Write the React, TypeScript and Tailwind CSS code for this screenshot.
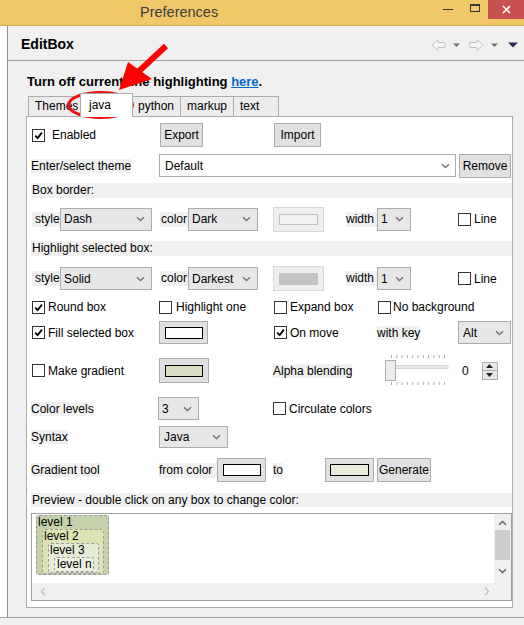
import React from "react";

function Chevron() {
  return (
    <svg width="9" height="6" viewBox="0 0 9 6" className="shrink-0">
      <path d="M1 1.2l3.5 3.3 3.5-3.3" fill="none" stroke="#707070" strokeWidth="1.3" />
    </svg>
  );
}

function Select({ value, className }: { value: string; className: string }) {
  return (
    <div
      className={`flex items-center justify-between border border-[#acacac] bg-[#e7e7e7] pl-[3px] pr-[6px] ${className}`}
    >
      <span>{value}</span>
      <Chevron />
    </div>
  );
}

function Check({ on }: { on?: boolean }) {
  return (
    <span className="flex h-[13px] w-[13px] shrink-0 items-center justify-center border border-[#333333] bg-white">
      {on && (
        <svg width="9" height="9" viewBox="0 0 9 9">
          <path d="M1.2 4.6l2.4 2.5L7.9 1.6" fill="none" stroke="#000" strokeWidth="1.8" />
        </svg>
      )}
    </span>
  );
}

function Label({ children, className = "" }: { children: React.ReactNode; className?: string }) {
  return <span className={`bg-[#f0f0f0] leading-[15px] ${className}`}>{children}</span>;
}

function Button({ children, className }: { children: React.ReactNode; className: string }) {
  return (
    <div className={`flex items-center justify-center border border-[#adadad] bg-[#e1e1e1] ${className}`}>
      {children}
    </div>
  );
}

function ColorButton({
  className,
  inner,
  disabled,
}: {
  className: string;
  inner: string;
  disabled?: boolean;
}) {
  return (
    <div
      className={`flex items-center justify-center border ${
        disabled ? "border-[#d9d9d9] bg-[#efefef]" : "border-[#adadad] bg-[#e1e1e1]"
      } ${className}`}
    >
      <div className={inner} />
    </div>
  );
}

function Slider() {
  const ticks = Array.from({ length: 11 }, (_, i) => 6 + i * 5.3);
  return (
    <svg width="66" height="32" viewBox="0 0 66 32" className="shrink-0">
      {ticks.map((x) => (
        <g key={x}>
          <line x1={x + 0.5} y1="0" x2={x + 0.5} y2="3" stroke="#b0b0b0" />
          <line x1={x + 0.5} y1="27" x2={x + 0.5} y2="30" stroke="#b0b0b0" />
        </g>
      ))}
      <rect x="10" y="10.5" width="53" height="3" fill="#e7e7e7" stroke="#d6d6d6" />
      <rect x="0.5" y="5.5" width="10" height="20" fill="#ececec" stroke="#adadad" />
    </svg>
  );
}

function Spinner() {
  return (
    <div className="flex h-[18px] w-[16px] flex-col border border-[#acacac] bg-[#e7e7e7]">
      <div className="flex flex-1 items-center justify-center border-b border-[#acacac]">
        <svg width="7" height="4" viewBox="0 0 7 4">
          <path d="M0 4L3.5 0 7 4z" fill="#222" />
        </svg>
      </div>
      <div className="flex flex-1 items-center justify-center">
        <svg width="7" height="4" viewBox="0 0 7 4">
          <path d="M0 0h7L3.5 4z" fill="#222" />
        </svg>
      </div>
    </div>
  );
}

function TitleBar() {
  return (
    <div className="flex h-[26px] items-center border-b border-[#d2a952] bg-[#f0c868]">
      <span className="ml-[140px] -mt-[2px] text-[14.5px] leading-[18px] text-[#3c3c3c]">Preferences</span>
      <div className="ml-auto flex h-full items-start">
        <div className="mt-[9px] mr-[17px] h-[1px] w-[10px] bg-[#333]" />
        <div className="mt-[4px] mr-[8px] h-[8px] w-[10px] border border-t-2 border-[#333]" />
        <div className="flex h-[19px] w-[36px] items-center justify-center bg-[#c75050]">
          <svg width="9" height="9" viewBox="0 0 9 9">
            <path d="M1 1l7 7M8 1L1 8" stroke="#fff" strokeWidth="1.6" />
          </svg>
        </div>
      </div>
    </div>
  );
}

function NavIcons() {
  return (
    <svg width="90" height="14" viewBox="0 0 90 14">
      <path d="M1 7l6-5.5v3h7v5H7v3z" fill="#f6f6f6" stroke="#c4c4c4" strokeLinejoin="round" />
      <path d="M22 5.5h7l-3.5 3.5z" fill="#707070" />
      <path d="M52 7l-6-5.5v3h-7v5h7v3z" fill="#f6f6f6" stroke="#c4c4c4" strokeLinejoin="round" />
      <path d="M60 5.5h7l-3.5 3.5z" fill="#707070" />
      <path d="M77 4.5h10l-5 5z" fill="#2c2c50" />
    </svg>
  );
}

function Annotation() {
  return (
    <svg
      className="pointer-events-none absolute left-0 top-0"
      width="524"
      height="625"
      viewBox="0 0 524 625"
    >
      <line x1="166" y1="46" x2="137" y2="73" stroke="#ff0000" strokeWidth="6" />
      <path d="M128 62L152 79 119 90z" fill="#ff0000" />
      <ellipse cx="100.5" cy="105" rx="32" ry="12.5" fill="none" stroke="#ee1111" strokeWidth="3" />
    </svg>
  );
}

function Tabs() {
  const base = "flex items-center border border-b-0 border-[#acacac] leading-[15px]";
  return (
    <div className="mt-[3px] ml-[2px] flex h-[23px] items-end">
      <div className={`${base} h-[20px] w-[53px] bg-[#ececec] pl-[6px]`}>Themes</div>
      <div className={`${base} relative z-10 -mb-px -ml-px h-[24px] w-[53px] bg-white pl-[8px]`}>
        java
      </div>
      <div className={`${base} -ml-px h-[20px] w-[49px] bg-[#ececec] pl-[5px]`}>python</div>
      <div className={`${base} -ml-px h-[20px] w-[54px] bg-[#ececec] pl-[6px]`}>markup</div>
      <div className={`${base} -ml-px h-[20px] w-[46px] bg-[#ececec] pl-[6px]`}>text</div>
    </div>
  );
}

function Preview() {
  const box = "flex flex-1 flex-col rounded-[3px] border border-dashed border-[#9c9c9c]";
  return (
    <div className="mt-[6px] flex h-[88px] flex-col border border-[#a0a0a0]">
      <div className="flex h-[69px]">
        <div className="flex flex-1 bg-white pt-[1px] pl-[4px]">
          <div className="flex h-[60px] w-[73px] flex-col overflow-hidden">
            <div className={`${box} bg-[#c5d1aa] pr-[4px] pl-[5px]`}>
              <span className="-ml-[4px] leading-[13px]">level 1</span>
              <div className={`${box} bg-[#dce4b6] pr-[4px] pl-[5px]`}>
                <span className="-ml-[4px] leading-[13px]">level 2</span>
                <div className={`${box} bg-[#e6ebd4] pr-[4px] pl-[5px]`}>
                  <span className="-ml-[4px] leading-[13px]">level 3</span>
                  <div className={`${box} bg-[#eef1e2] pl-[2px]`}>
                    <span className="leading-[13px]">level n</span>
                  </div>
                </div>
              </div>
            </div>
          </div>
        </div>
        <div className="flex w-[17px] flex-col items-center bg-[#f0f0f0]">
          <svg width="9" height="6" viewBox="0 0 9 6" className="mt-[6px]">
            <path d="M1 4.8l3.5-3.3 3.5 3.3" fill="none" stroke="#606060" strokeWidth="1.3" />
          </svg>
          <div className="mt-[4px] h-[30px] w-[15px] bg-[#cdcdcd]" />
          <svg width="9" height="6" viewBox="0 0 9 6" className="mt-[8px]">
            <path d="M1 1.2l3.5 3.3 3.5-3.3" fill="none" stroke="#606060" strokeWidth="1.3" />
          </svg>
        </div>
      </div>
      <div className="flex flex-1 items-center justify-between bg-[#f0f0f0] pr-[21px] pl-[8px]">
        <svg width="6" height="9" viewBox="0 0 6 9">
          <path d="M4.8 1L1.5 4.5 4.8 8" fill="none" stroke="#c0c0c0" strokeWidth="1.3" />
        </svg>
        <svg width="6" height="9" viewBox="0 0 6 9">
          <path d="M1.2 1l3.3 3.5L1.2 8" fill="none" stroke="#c0c0c0" strokeWidth="1.3" />
        </svg>
      </div>
    </div>
  );
}

function Panel() {
  return (
    <div className="flex w-[487px] flex-col border border-[#acacac] bg-white pl-[4px] pb-[6px]">
      {/* enabled / export / import */}
      <div className="mt-[6px] flex h-[24px] items-center">
        <div className="flex w-[129px] items-center pl-[1px]">
          <Check on />
          <span className="ml-[7px]">Enabled</span>
        </div>
        <Button className="h-[24px] w-[43px]">Export</Button>
        <Button className="ml-[71px] h-[24px] w-[47px]">Import</Button>
      </div>

      {/* theme */}
      <div className="mt-[7px] flex h-[23px] items-center">
        <div className="w-[128px]">
          <Label>Enter/select theme</Label>
        </div>
        <div className="flex h-[23px] w-[297px] items-center justify-between border border-[#abadb3] bg-white pr-[5px] pl-[5px]">
          <span>Default</span>
          <Chevron />
        </div>
        <Button className="ml-[3px] h-[24px] w-[52px]">Remove</Button>
      </div>

      <div className="mt-[6px] h-[15px] bg-[#f0f0f0] pl-[1px] leading-[15px]">Box border:</div>

      <div className="mt-[8px] flex h-[26px] items-center">
        <Label className="ml-[1px] w-[28px] pl-[3px]">style</Label>
        <Select value="Dash" className="h-[23px] w-[92px]" />
        <Label className="ml-[8px] w-[28px] pl-[1px]">color</Label>
        <Select value="Dark" className="h-[23px] w-[70px]" />
        <ColorButton
          disabled
          className="ml-[15px] h-[25px] w-[51px]"
          inner="h-[11px] w-[39px] border border-[#c0c0c0] bg-[#f2f2f2]"
        />
        <Label className="ml-[22px] w-[31px]">width</Label>
        <Select value="1" className="h-[23px] w-[34px]" />
        <span className="ml-[47px]">
          <Check />
        </span>
        <span className="ml-[3px]">Line</span>
      </div>

      <div className="mt-[9px] h-[15px] bg-[#f0f0f0] pl-[1px] leading-[15px]">Highlight selected box:</div>

      <div className="mt-[9px] flex h-[27px] items-center">
        <Label className="ml-[1px] w-[28px] pl-[3px]">style</Label>
        <Select value="Solid" className="h-[23px] w-[92px]" />
        <Label className="ml-[8px] w-[28px] pl-[1px]">color</Label>
        <Select value="Darkest" className="h-[23px] w-[70px]" />
        <ColorButton
          disabled
          className="ml-[15px] h-[25px] w-[51px]"
          inner="h-[12px] w-[39px] bg-[#c3c3c3]"
        />
        <Label className="ml-[22px] w-[31px]">width</Label>
        <Select value="1" className="h-[23px] w-[34px]" />
        <span className="ml-[47px]">
          <Check />
        </span>
        <span className="ml-[3px]">Line</span>
      </div>

      {/* check row */}
      <div className="mt-[8px] flex h-[15px] items-center leading-[15px]">
        <div className="flex w-[128px] items-center pl-[1px]">
          <Check on />
          <span className="ml-[3px]">Round box</span>
        </div>
        <div className="flex w-[115px] items-center">
          <Check />
          <span className="ml-[4px]">Highlight one</span>
        </div>
        <div className="flex w-[104px] items-center">
          <Check />
          <span className="ml-[3px]">Expand box</span>
        </div>
        <div className="flex items-center">
          <Check />
          <span className="ml-[2px]">No background</span>
        </div>
      </div>

      <div className="mt-[6px] flex h-[23px] items-center">
        <div className="flex w-[128px] items-center pl-[1px]">
          <Check on />
          <span className="ml-[3px]">Fill selected box</span>
        </div>
        <div className="w-[115px]">
          <ColorButton
            className="h-[23px] w-[49px]"
            inner="h-[12px] w-[38px] border border-black bg-white"
          />
        </div>
        <div className="flex w-[103px] items-center">
          <Check on />
          <span className="ml-[3px]">On move</span>
        </div>
        <div className="w-[81px]">
          <Label>with key</Label>
        </div>
        <Select value="Alt" className="h-[23px] w-[53px] pl-[4px]" />
      </div>

      <div className="mt-[14px] flex h-[25px] items-center">
        <div className="flex w-[128px] items-center pl-[1px]">
          <Check />
          <span className="ml-[3px]">Make gradient</span>
        </div>
        <div className="w-[114px]">
          <ColorButton
            className="h-[25px] w-[50px]"
            inner="h-[12px] w-[38px] border border-black bg-[#dcdfc4]"
          />
        </div>
        <div className="w-[112px]">
          <Label>Alpha blending</Label>
        </div>
        <Slider />
        <span className="ml-[11px]">0</span>
        <span className="ml-[13px]">
          <Spinner />
        </span>
      </div>

      <div className="mt-[14px] flex h-[23px] items-center">
        <div className="w-[127px]">
          <Label>Color levels</Label>
        </div>
        <div className="w-[115px]">
          <Select value="3" className="h-[23px] w-[41px]" />
        </div>
        <div className="flex items-center">
          <Check />
          <span className="ml-[3px]">Circulate colors</span>
        </div>
      </div>

      <div className="mt-[6px] flex h-[22px] items-center">
        <div className="w-[128px]">
          <Label>Syntax</Label>
        </div>
        <Select value="Java" className="h-[22px] w-[69px] pl-[4px]" />
      </div>

      <div className="mt-[10px] flex h-[24px] items-center">
        <div className="w-[128px]">
          <Label>Gradient tool</Label>
        </div>
        <Label className="w-[58px]">from color</Label>
        <ColorButton
          className="h-[24px] w-[49px]"
          inner="h-[12px] w-[38px] border border-black bg-white"
        />
        <Label className="ml-[7px]">to</Label>
        <ColorButton
          className="ml-[42px] h-[24px] w-[49px]"
          inner="h-[12px] w-[39px] border border-black bg-[#eaebdb]"
        />
        <Button className="ml-[3px] h-[24px] w-[54px]">Generate</Button>
      </div>

      <div className="mt-[11px] h-[14px] bg-[#f0f0f0] pl-[1px] leading-[14px]">
        Preview - double click on any box to change color:
      </div>

      <Preview />
    </div>
  );
}

export default function App() {
  return (
    <div className="relative h-[625px] w-[524px] overflow-hidden bg-[#f0f0f0] font-['Liberation_Sans',Arial,sans-serif] text-[12px] text-black">
      <TitleBar />
      <div className="flex h-[591px]">
        <div className="w-[7px] bg-white" />
        <div className="flex flex-1 flex-col border-l border-[#8c8c8c]">
          <div className="flex h-[35px] items-center border-b border-[#a0a0a0] pt-[2px] pr-[3px] pl-[13px]">
            <span className="text-[14px] font-bold">EditBox</span>
            <span className="ml-auto mt-[1px]">
              <NavIcons />
            </span>
          </div>
          <div className="pl-[18px]">
            <div className="mt-[13px] ml-[1px] h-[16px] text-[13px] font-bold leading-[16px]">
              Turn off current line highlighting{" "}
              <span className="text-[#0066cc] underline">here</span>.
            </div>
            <Tabs />
            <Panel />
          </div>
        </div>
      </div>
      <div className="h-[8px] border-t border-[#a0a0a0] bg-[#f0f0f0]" />
      <Annotation />
    </div>
  );
}
